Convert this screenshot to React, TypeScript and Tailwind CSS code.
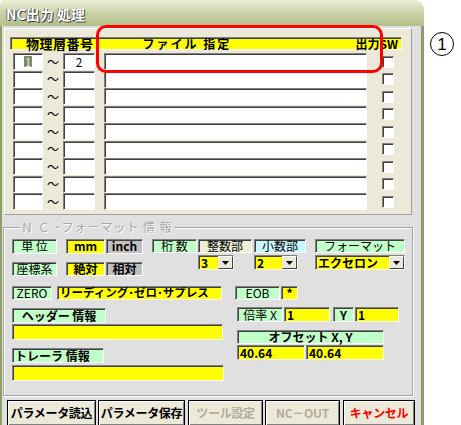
import React from "react";

const sunk =
  "border border-t-[#808080] border-l-[#808080] border-b-white border-r-white shadow-[inset_1px_1px_0_#404040]";

const green = "bg-[#c0ffc8]";
const yellow = "bg-[#ffff00]";

function Box({
  className = "",
  bold = false,
  left = false,
  children,
}: {
  className?: string;
  bold?: boolean;
  left?: boolean;
  children?: React.ReactNode;
}) {
  return (
    <div
      className={`${sunk} flex items-center leading-none whitespace-nowrap ${
        left ? "justify-start pl-[2px]" : "justify-center"
      } ${bold ? "font-bold" : ""} ${className}`}
    >
      {children}
    </div>
  );
}

function Combo({ className = "", children }: { className?: string; children: React.ReactNode }) {
  return (
    <div className={`${sunk} flex h-[15px] ${yellow} ${className}`}>
      <span className="flex flex-1 items-center pl-[2px] font-bold leading-none">{children}</span>
      <div className="flex w-[15px] items-center justify-center border border-t-white border-l-white border-b-[#404040] border-r-[#404040] bg-[#ece9d8]">
        <svg width="7" height="4" viewBox="0 0 7 4">
          <path d="M0 0h7L3.5 4z" fill="#000" />
        </svg>
      </div>
    </div>
  );
}

const rows = Array.from({ length: 9 }, (_, i) => i);

const btn =
  "flex h-[26px] items-center justify-center border border-black bg-[#ece9d8] shadow-[inset_1px_1px_0_#ffffff,inset_-1px_-1px_0_#808080] text-[12px] font-bold tracking-[-0.3px] whitespace-nowrap";

export default function App() {
  return (
    <div className="relative h-[425px] w-[461px] overflow-hidden bg-white font-['Noto_Sans_CJK_JP',sans-serif] text-[12px] text-black">
      <div className="flex h-full w-[424px] flex-col">
        {/* title bar */}
        <div className="flex h-[26px] shrink-0 items-center rounded-tl-[4px] rounded-tr-[9px] bg-[linear-gradient(#eef0d8,#cdd5ab_45%,#b2be8a)] pl-[6px] pt-[3px]">
          <span className="text-[14px] font-bold text-white [text-shadow:1px_1px_0_#3c3c3c,-1px_0_0_#707070]">
            NC出力 処理
          </span>
        </div>

        <div className="flex flex-1 flex-col border-l-2 border-r-[3px] border-[#8d9e66] bg-[#e0e0e0] pl-[1px]">
          {/* file panel */}
          <div className="ml-[1px] mt-[2px] h-[187px] w-[408px] border border-t-white border-l-white border-b-[#a0a0a0] border-r-[#a0a0a0] bg-[#ece9d8] pl-[5px] pt-[8px]">
            <div className={`${sunk} flex h-[13px] w-[392px] items-center ${yellow} font-bold leading-none`}>
              <span className="ml-[15px] text-[13px] tracking-[0.5px]">物理層番号</span>
              <span className="ml-[49px] tracking-[2px]">ファイル 指定</span>
              <span className="ml-auto mr-[3px]">出力SW</span>
            </div>
            <div className="mt-[3px] flex flex-col gap-[0.5px] pl-[3px]">
              {rows.map((i) => (
                <div key={i} className="flex h-[17px]">
                  <div className={`${sunk} flex w-[30px] items-center justify-center bg-white`}>
                    {i === 0 && (
                      <span className="bg-[#7b8b63] px-[1px] text-[12px] leading-[11px] text-[#e8e8e8]">1</span>
                    )}
                  </div>
                  <div className="flex w-[20px] items-center justify-center text-[12px] leading-[12px]">～</div>
                  <div className={`${sunk} flex w-[32px] items-center justify-center bg-white leading-none`}>
                    {i === 0 && "2"}
                  </div>
                  <div className={`${sunk} ml-[9px] w-[263px] bg-white`} />
                  <div className="ml-[15px] flex items-center">
                    <div className={`${sunk} h-[12px] w-[12px] bg-white`} />
                  </div>
                </div>
              ))}
            </div>
          </div>

          {/* NC format group */}
          <div className="mt-[6px] flex w-[410px] flex-col">
            <div className="flex h-[12px]">
              <div className="flex w-[16px] flex-col">
                <div className="h-[6px]" />
                <div className="flex-1 border-l border-t border-[#a0a0a0] shadow-[inset_1px_1px_0_#ffffff]" />
              </div>
              <span className="px-[2px] text-[12px] leading-[12px] tracking-[1px] text-[#a8a8a8] [text-shadow:1px_1px_0_#ffffff]">
                Ｎ Ｃ ･フォーマット 情 報
              </span>
              <div className="flex flex-1 flex-col">
                <div className="h-[6px]" />
                <div className="flex-1 border-r border-t border-[#a0a0a0] shadow-[inset_0_1px_0_#ffffff,1px_0_0_#ffffff]" />
              </div>
            </div>
            <div className="border-x border-b border-[#a0a0a0] pb-[14px] pl-[8px] pt-[6px] shadow-[inset_1px_0_0_#ffffff,1px_1px_0_#ffffff]">
              {/* units / digits / format */}
              <div className="flex h-[37px]">
                <div className="flex flex-col gap-[8px]">
                  <div className="flex h-[15px]">
                    <Box className={`w-[45px] ${green}`}>単 位</Box>
                    <Box bold className={`ml-[9px] w-[39px] ${yellow}`}>mm</Box>
                    <Box bold className="ml-[1px] w-[37px] bg-[#c0c0c0]">inch</Box>
                  </div>
                  <div className="flex h-[15px]">
                    <Box className={`w-[45px] ${green}`}>座標系</Box>
                    <Box bold className={`ml-[9px] w-[39px] ${yellow}`}>絶対</Box>
                    <Box bold className="ml-[1px] w-[37px] bg-[#c0c0c0]">相対</Box>
                  </div>
                </div>
                <Box className={`ml-[9px] h-[14px] w-[45px] ${green}`}>桁 数</Box>
                <div className="ml-[1px] flex w-[54px] flex-col gap-[2px]">
                  <Box className="h-[14px] bg-[#eeeed6]">整数部</Box>
                  <Combo className="w-[36px]">3</Combo>
                </div>
                <div className="ml-[2px] flex w-[52px] flex-col gap-[2px]">
                  <Box className="h-[14px] bg-[#c8f6ff]">小数部</Box>
                  <Combo className="w-[44px]">2</Combo>
                </div>
                <div className="ml-[9px] flex w-[90px] flex-col gap-[2px]">
                  <Box className={`h-[14px] ${green}`}>フォーマット</Box>
                  <Combo className="w-full">エクセロン</Combo>
                </div>
              </div>

              {/* zero suppress / EOB */}
              <div className="mt-[10px] flex h-[14px]">
                <Box className={`w-[40px] ${green}`}>ZERO</Box>
                <Box bold left className={`ml-[5px] w-[165px] text-[11.5px] ${yellow}`}>
                  リーディング･ゼロ･サプレス
                </Box>
                <Box className={`ml-[13px] w-[45px] ${green}`}>EOB</Box>
                <Box bold className={`ml-[1px] w-[17px] ${yellow}`}>*</Box>
              </div>

              {/* header/trailer + scale/offset */}
              <div className="mt-[7px] flex">
                <div className="flex w-[212px] flex-col pt-[1px]">
                  <Box bold className={`h-[15px] w-[94px] ${green}`}>ヘッダー 情報</Box>
                  <div className={`${sunk} mt-[1px] h-[16px] w-[211px] ${yellow}`} />
                  <Box bold left className={`mt-[8px] h-[15px] w-[92px] ${green}`}>トレーラ 情報</Box>
                  <div className={`${sunk} mt-[2px] h-[16px] w-[212px] ${yellow}`} />
                </div>
                <div className="ml-[13px] flex flex-col">
                  <div className="flex h-[15px]">
                    <Box className={`w-[46px] ${green}`}>倍率 X</Box>
                    <Box bold left className={`ml-[1px] w-[46px] ${yellow}`}>1</Box>
                    <Box bold className={`ml-[3px] w-[21px] ${green}`}>Y</Box>
                    <Box bold left className={`ml-[1px] w-[44px] ${yellow}`}>1</Box>
                  </div>
                  <Box bold className={`mt-[8px] h-[14px] w-[147px] ${green}`}>オフセット X, Y</Box>
                  <div className="mt-[1px] flex h-[15px]">
                    <Box bold left className={`w-[68px] ${yellow}`}>40.64</Box>
                    <Box bold left className={`ml-[1px] w-[78px] ${yellow}`}>40.64</Box>
                  </div>
                </div>
              </div>
            </div>
          </div>

          {/* buttons */}
          <div className="ml-[4px] mt-[4px] flex">
            <button className={`${btn} w-[89px]`}>パラメータ読込</button>
            <button className={`${btn} ml-[2px] w-[87px]`}>パラメータ保存</button>
            <button className={`${btn} ml-[3px] w-[75px] text-[#b0ad9e]`}>ツール設定</button>
            <button className={`${btn} ml-[2px] w-[75px] text-[#b0ad9e]`}>NC－OUT</button>
            <button className={`${btn} ml-[3px] w-[72px] text-[#ff0000]`}>キャンセル</button>
          </div>
        </div>
      </div>

      {/* annotation overlay */}
      <div className="absolute left-[96px] top-[25px] h-[48px] w-[287px] rounded-[10px] border-[3px] border-[#ff0000]" />
      <div className="absolute left-[430px] top-[32px] flex h-[24px] w-[24px] items-center justify-center rounded-full border-[1.5px] border-black font-['Liberation_Sans',sans-serif] text-[17px] leading-none">
        1
      </div>
    </div>
  );
}
